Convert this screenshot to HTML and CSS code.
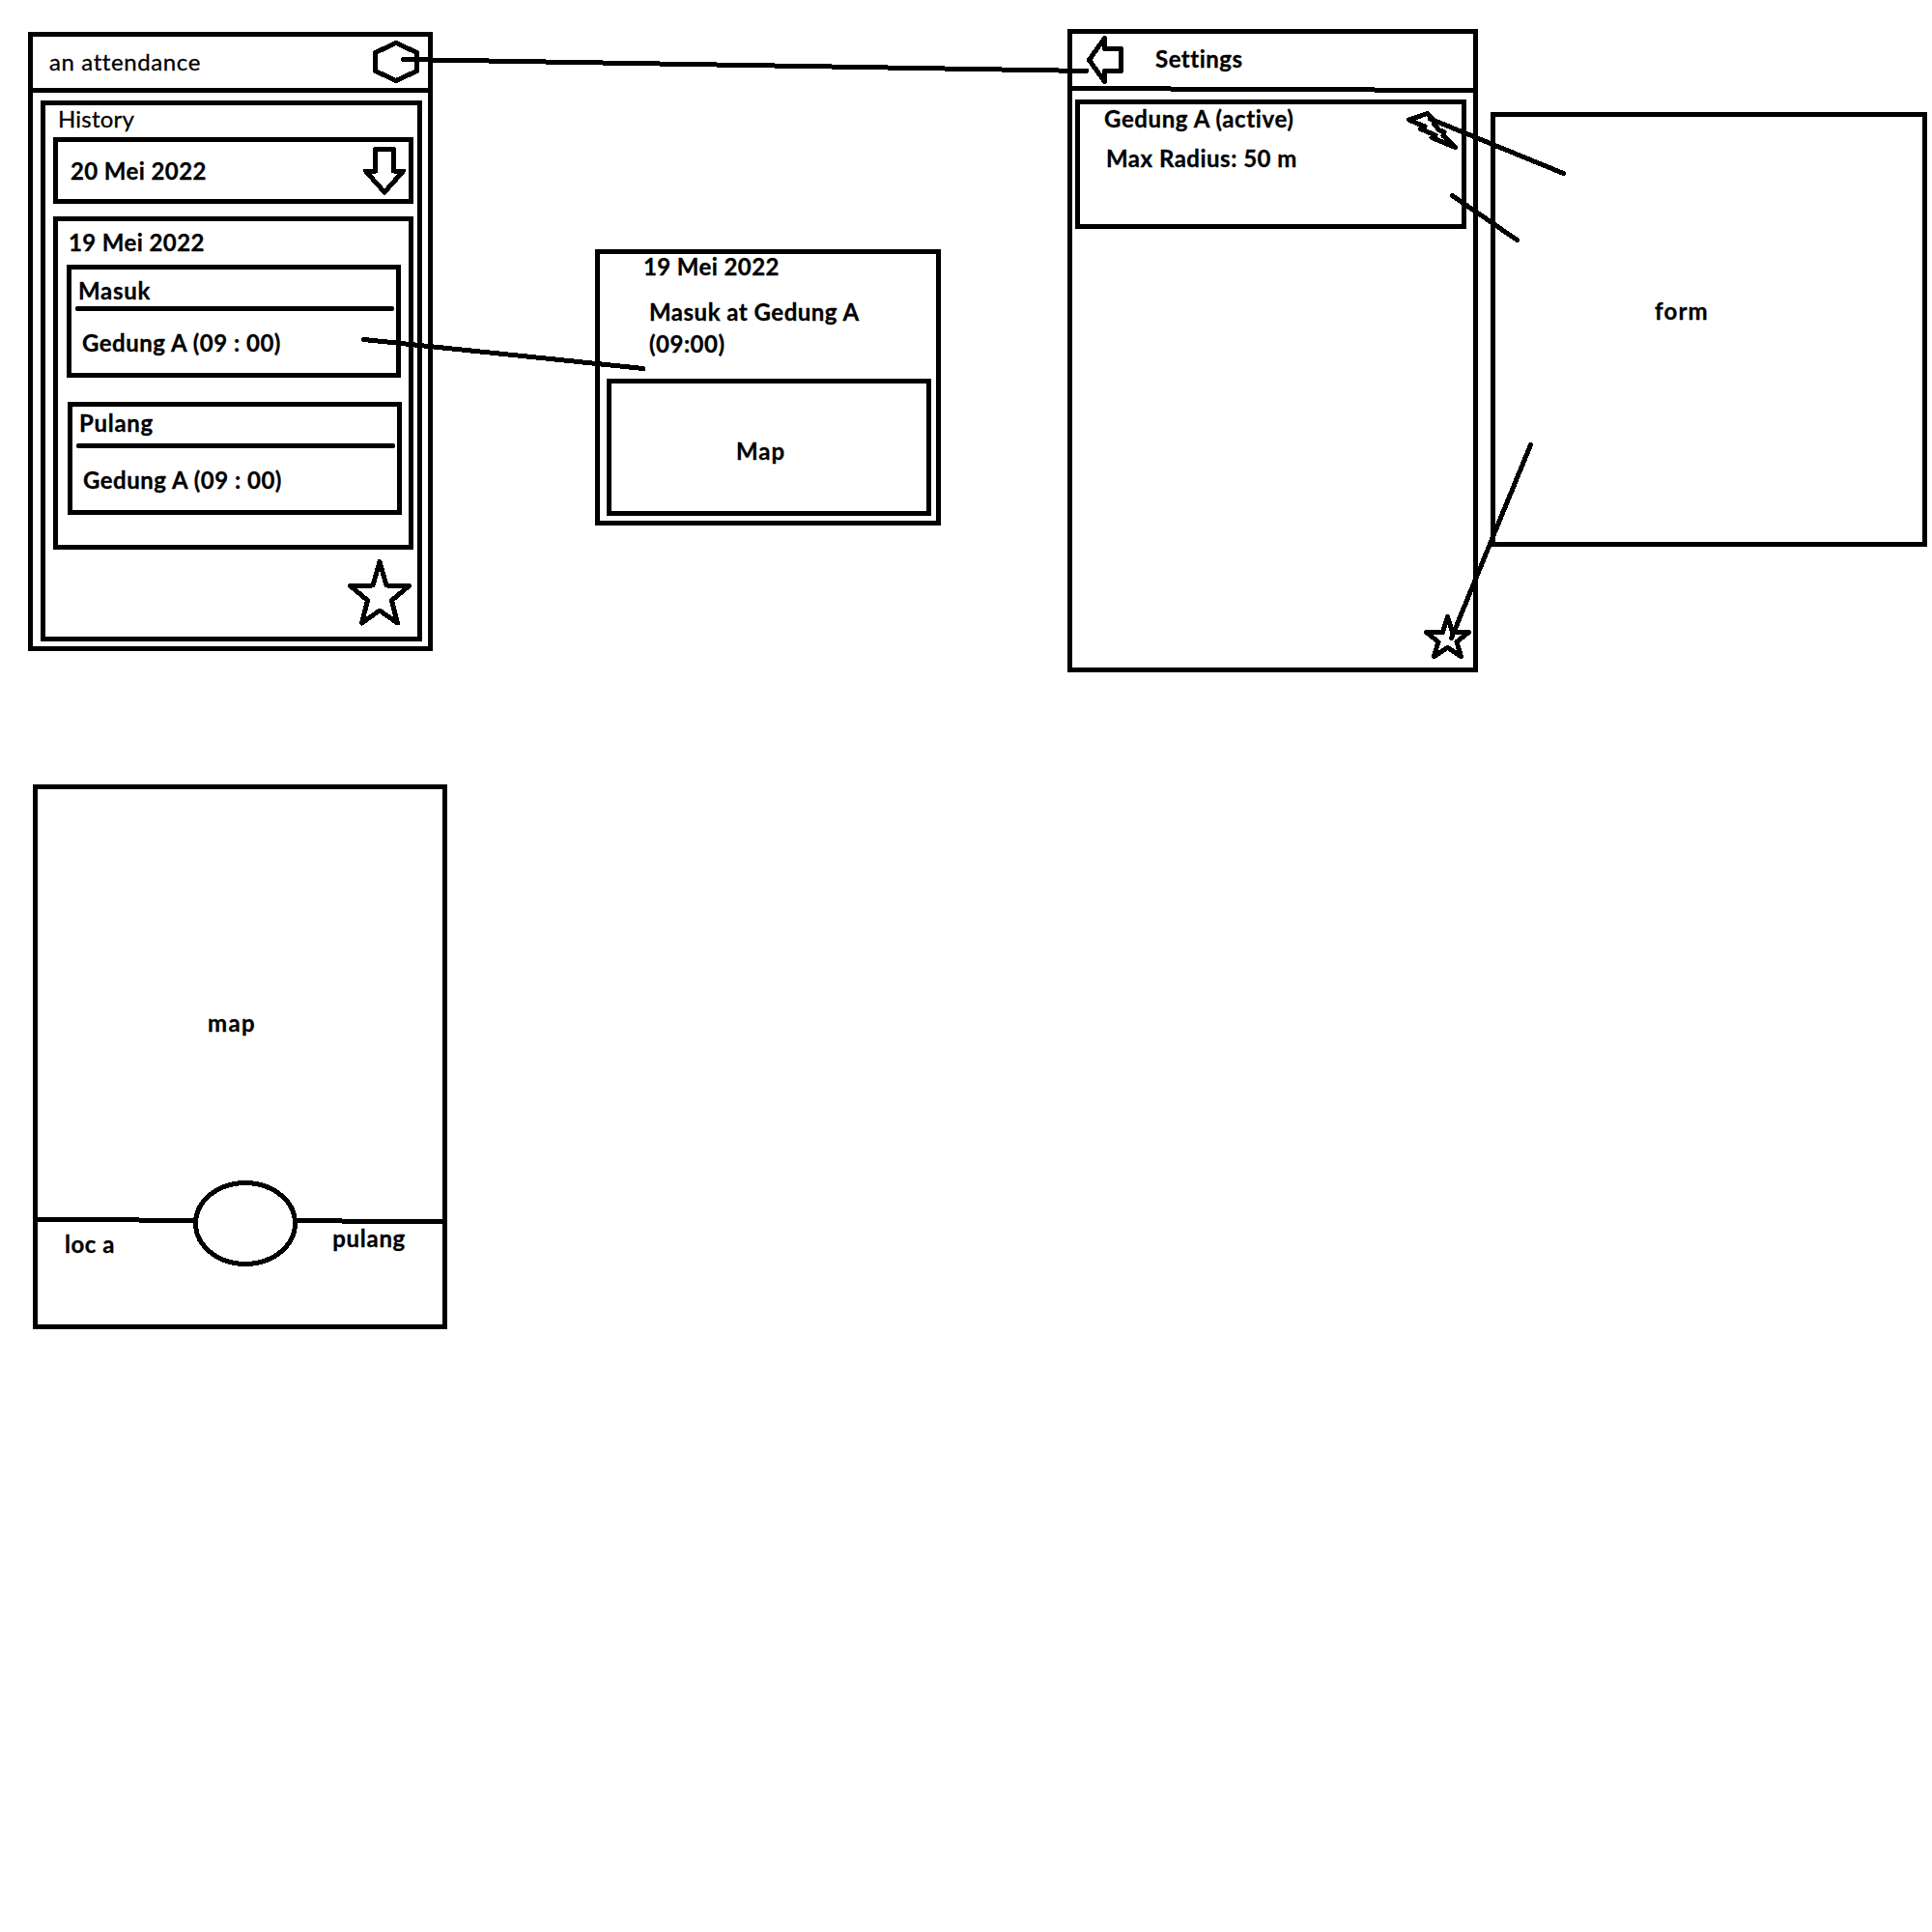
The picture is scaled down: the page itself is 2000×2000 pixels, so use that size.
FILE: index.html
```html
<!DOCTYPE html>
<html lang="id">
<head>
<meta charset="utf-8">
<title>Attendance wireframes</title>
<link rel="stylesheet" href="styles.css">
</head>
<body>
<main class="canvas">
  <section class="frame home">
    <header class="bar home-bar">
      <h1 class="app-name">an attendance</h1>
      <svg class="icon" width="48" height="44" viewBox="386 42 48 44"><path d="M410 44.5L431.5 54.5V73.5L410 83.5L388.5 73.5V54.5Z"/></svg>
    </header>
    <div class="frame history">
      <h2 class="history-title">History</h2>
      <div class="frame day-closed">
        <span class="day-date">20 Mei 2022</span>
        <svg class="icon" width="44" height="50" viewBox="376 152 44 50"><path d="M388.5 154.5H407.5V177H417.5L398 199L378.5 177H388.5Z"/></svg>
      </div>
      <div class="frame day-open">
        <p class="day-title">19 Mei 2022</p>
        <article class="frame entry">
          <p class="entry-title">Masuk</p>
          <hr class="rule">
          <p class="entry-place">Gedung A (09 : 00)</p>
        </article>
        <article class="frame entry entry-out">
          <p class="entry-title entry-title-out">Pulang</p>
          <hr class="rule">
          <p class="entry-place">Gedung A (09 : 00)</p>
        </article>
      </div>
      <svg class="icon home-star" width="66" height="69" viewBox="360 579 66 69"><path d="M393 581.5L400 606L423.5 606.5L405.5 621.5L411.5 645L393 632L374.5 645L380.5 621.5L362.5 606.5L386 606Z"/></svg>
    </div>
  </section>

  <section class="frame detail">
    <p class="detail-date">19 Mei 2022</p>
    <p class="detail-text">Masuk at Gedung A<br>(09:00)</p>
    <div class="frame detail-map"><span>Map</span></div>
  </section>

  <section class="frame settings">
    <header class="bar settings-bar">
      <svg class="icon" width="38" height="50" viewBox="1125 37 38 50"><path d="M1127.5 62L1143.5 39.5V50.5H1160.5V73.5H1143.5V84.5Z"/></svg>
      <h1 class="settings-title">Settings</h1>
    </header>
    <svg class="settings-rule" width="415" height="7" viewBox="1110 89 415 7"><path d="M1110 91.5H1212M1212 92.5H1423M1423 93.5H1525"/></svg>
    <div class="frame place">
      <div class="place-text">
        <p class="place-name">Gedung A (active)</p>
        <p class="place-radius">Max Radius: 50 m</p>
      </div>
      <svg class="icon place-bolt" width="54" height="41" viewBox="1456 115 54 41"><path d="M1477.5 117.5L1458.5 124L1475 131L1470.5 133.5L1486 140L1482 142.5L1506.5 152.5L1494 140.5L1495 136.5L1490 135L1484 127.5L1484 124.5Z"/></svg>
    </div>
    <svg class="icon settings-star" width="50" height="47" viewBox="1474 636 50 47"><path d="M1498.5 638.5L1503.5 654.5H1520.5L1508 664.5L1512.5 679.5L1498.5 670.5L1484.5 679.5L1489 664.5L1476.5 654.5H1493.5Z"/></svg>
  </section>

  <section class="frame form"><span>form</span></section>

  <section class="frame check">
    <p class="check-map">map</p>
    <svg class="check-divider" width="419" height="89" viewBox="39 1222 419 89"><path d="M39 1262.5H144M144 1263.5H202M306 1263.5H354M354 1264.5H458"/><ellipse cx="254" cy="1266.5" rx="51.5" ry="42"/></svg>
    <div class="check-labels"><span class="check-loc">loc a</span><span class="check-out">pulang</span></div>
  </section>

  <svg class="connectors" width="2000" height="2000" viewBox="0 0 2000 2000">
    <path d="M417.5 61.5L1125 73.5"/>
    <path d="M376.5 351.5L666 381.5"/>
    <path d="M1480.5 123L1618.5 179.5"/>
    <path d="M1503.5 202.5L1570.5 248.5"/>
    <path d="M1502.5 660.5L1584.5 460.5"/>
  </svg>
</main>
</body>
</html>
```

FILE: styles.css
```css
* { box-sizing: border-box; }

body {
  margin: 0;
  background: #fff;
  color: #000;
  font: 700 24px/33px Lato, "Open Sans", sans-serif;
  font-variant-ligatures: none;
  letter-spacing: 0.5px;
  -webkit-text-stroke: 0.3px #000;
}

h1, h2, p { margin: 0; font-size: inherit; white-space: nowrap; }
svg { display: block; flex: none; }

svg path, svg ellipse {
  fill: none;
  stroke: #000;
  stroke-width: 5;
  stroke-linejoin: round;
  shape-rendering: crispEdges;
}

.canvas { position: relative; width: 2000px; height: 2000px; overflow: hidden; }
.frame { border: 5px solid #000; }
.bar { display: flex; align-items: flex-start; }

/* Screens pinned on the free canvas */
.home, .detail, .settings, .form, .check { position: absolute; }
.home { left: 29px; top: 33px; width: 419px; height: 641px; }
.detail { left: 616px; top: 258px; width: 358px; height: 286px; }
.settings { left: 1105px; top: 30px; width: 425px; height: 666px; }
.form { left: 1543px; top: 116px; width: 452px; height: 450px; }
.check { left: 34px; top: 812px; width: 429px; height: 564px; }

/* Home */
.home-bar { height: 58px; border-bottom: 5px solid #000; padding: 4px 9px 0 17px; justify-content: space-between; }
.app-name { margin-top: 5px; font-weight: 400; letter-spacing: 0.6px; }
.history { margin: 8px 0 0 8px; width: 395px; height: 560px; padding: 0 4px 0 8px; }
.history-title { margin-top: -3px; height: 36px; padding-left: 5px; font-weight: 400; letter-spacing: 0.2px; }
.day-closed { display: flex; justify-content: space-between; height: 69px; padding: 5px 3px 0 13px; }
.day-date, .day-title, .detail-date { letter-spacing: 0.4px; }
.day-date { margin-top: 8px; }
.day-open { margin-top: 13px; height: 345px; padding: 5px 0 0 9px; }
.day-title { padding-left: 2px; height: 40px; }
.entry { width: 346px; height: 117px; padding: 5px 2px 0 4px; }
.entry-out { margin: 25px 0 0 1px; padding-top: 0; }
.entry-title { padding-left: 3px; height: 33px; letter-spacing: 0.7px; }
.entry-title-out { height: 38px; }
.rule { margin: 0; width: 330px; height: 5px; border: 0; border-radius: 2px; background: #000; }
.entry-place { margin-top: 16px; padding-left: 7px; }
.home-star { margin: 10px 0 0 305px; }

/* Entry detail */
.detail-date { margin: -4px 0 0 45px; }
.detail-text { margin: 14px 0 0 51px; }
.detail-map { margin: 20px 0 0 7px; width: 336px; height: 142px; padding: 53px 0 0 129px; letter-spacing: 1px; }

/* Settings */
.settings { display: flex; flex-direction: column; }
.settings-bar { height: 54px; padding: 2px 0 0 15px; gap: 33px; }
.settings-title { margin-top: 7px; }
.place { display: flex; justify-content: space-between; margin: 7px 0 0 3px; width: 405px; height: 134px; padding-right: 3px; }
.place-text { padding-left: 25px; margin-top: -2px; }
.place-name { letter-spacing: 0.6px; }
.place-radius { margin: 8px 0 0 2px; }
.place-bolt { margin-top: 7px; }
.settings-star { margin: auto 1px 8px auto; }

/* Form */
.form { padding: 184px 0 0 165px; letter-spacing: 1.2px; }

/* Check-in map */
.check-map { margin: 225px 0 0 176px; letter-spacing: 1.4px; }
.check-divider { margin-top: 147px; }
.check-labels { display: flex; align-items: flex-start; justify-content: space-between; margin-top: -46px; padding: 0 38px 0 28px; }
.check-loc { margin-top: 6px; }
.check-out { letter-spacing: 0.7px; }

.connectors { position: absolute; inset: 0; }
.connectors path { stroke-linecap: round; }
```
